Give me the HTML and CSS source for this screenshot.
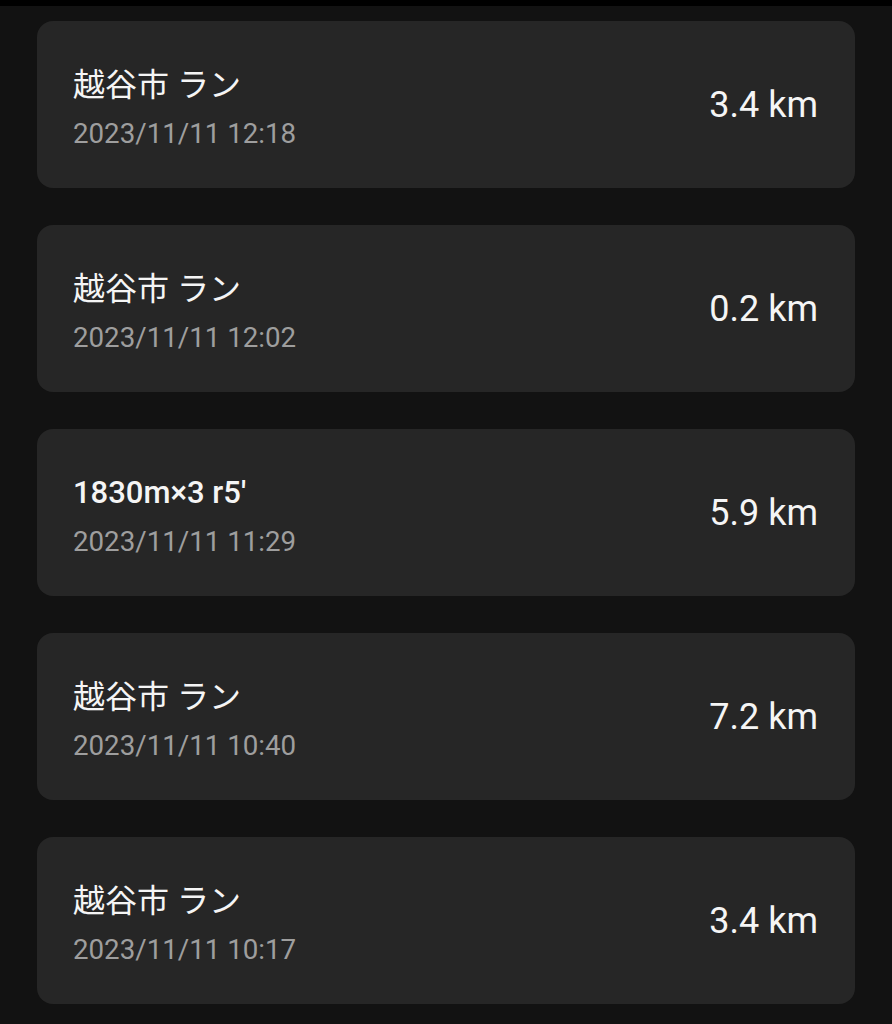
FILE: index.html
```html
<!DOCTYPE html>
<html lang="ja">
<head>
<meta charset="utf-8">
<link rel="stylesheet" href="styles.css">
</head>
<body>
<div class="topbar"></div>
<main class="list">
  <div class="card">
    <div class="info">
      <div class="title jp">越谷市 ラン</div>
      <div class="date">2023/11/11 12:18</div>
    </div>
    <div class="dist">3.4 km</div>
  </div>
  <div class="card">
    <div class="info">
      <div class="title jp">越谷市 ラン</div>
      <div class="date">2023/11/11 12:02</div>
    </div>
    <div class="dist">0.2 km</div>
  </div>
  <div class="card">
    <div class="info">
      <div class="title">1830m×3 r5'</div>
      <div class="date">2023/11/11 11:29</div>
    </div>
    <div class="dist">5.9 km</div>
  </div>
  <div class="card">
    <div class="info">
      <div class="title jp">越谷市 ラン</div>
      <div class="date">2023/11/11 10:40</div>
    </div>
    <div class="dist">7.2 km</div>
  </div>
  <div class="card">
    <div class="info">
      <div class="title jp">越谷市 ラン</div>
      <div class="date">2023/11/11 10:17</div>
    </div>
    <div class="dist">3.4 km</div>
  </div>
</main>
</body>
</html>
```
FILE: styles.css
```css
html, body {
  margin: 0;
  padding: 0;
  background: #121212;
  height: 100%;
  overflow: hidden;
}
body {
  font-family: Roboto, "Noto Sans CJK JP", sans-serif;
  color: #ffffff;
}
.topbar {
  height: 6px;
  background: #000000;
}
.list {
  display: flex;
  flex-direction: column;
  gap: 37px;
  padding: 15px 37px 0 37px;
}
.card {
  height: 167px;
  box-sizing: border-box;
  background: #262626;
  border-radius: 16px;
  display: flex;
  align-items: center;
  justify-content: space-between;
  padding: 0 37px 0 36px;
}
.info {
  display: flex;
  flex-direction: column;
  gap: 14px;
  margin-top: 8px;
}
.title {
  font-size: 31px;
  font-weight: 500;
  line-height: 36px;
  color: #f5f5f5;
}
.title.jp {
  font-size: 32px;
  font-weight: 400;
}
.date {
  font-size: 27.7px;
  line-height: 34px;
  color: #9e9e9e;
}
.dist {
  font-size: 36px;
  line-height: 42px;
  color: #f5f5f5;
}
```
